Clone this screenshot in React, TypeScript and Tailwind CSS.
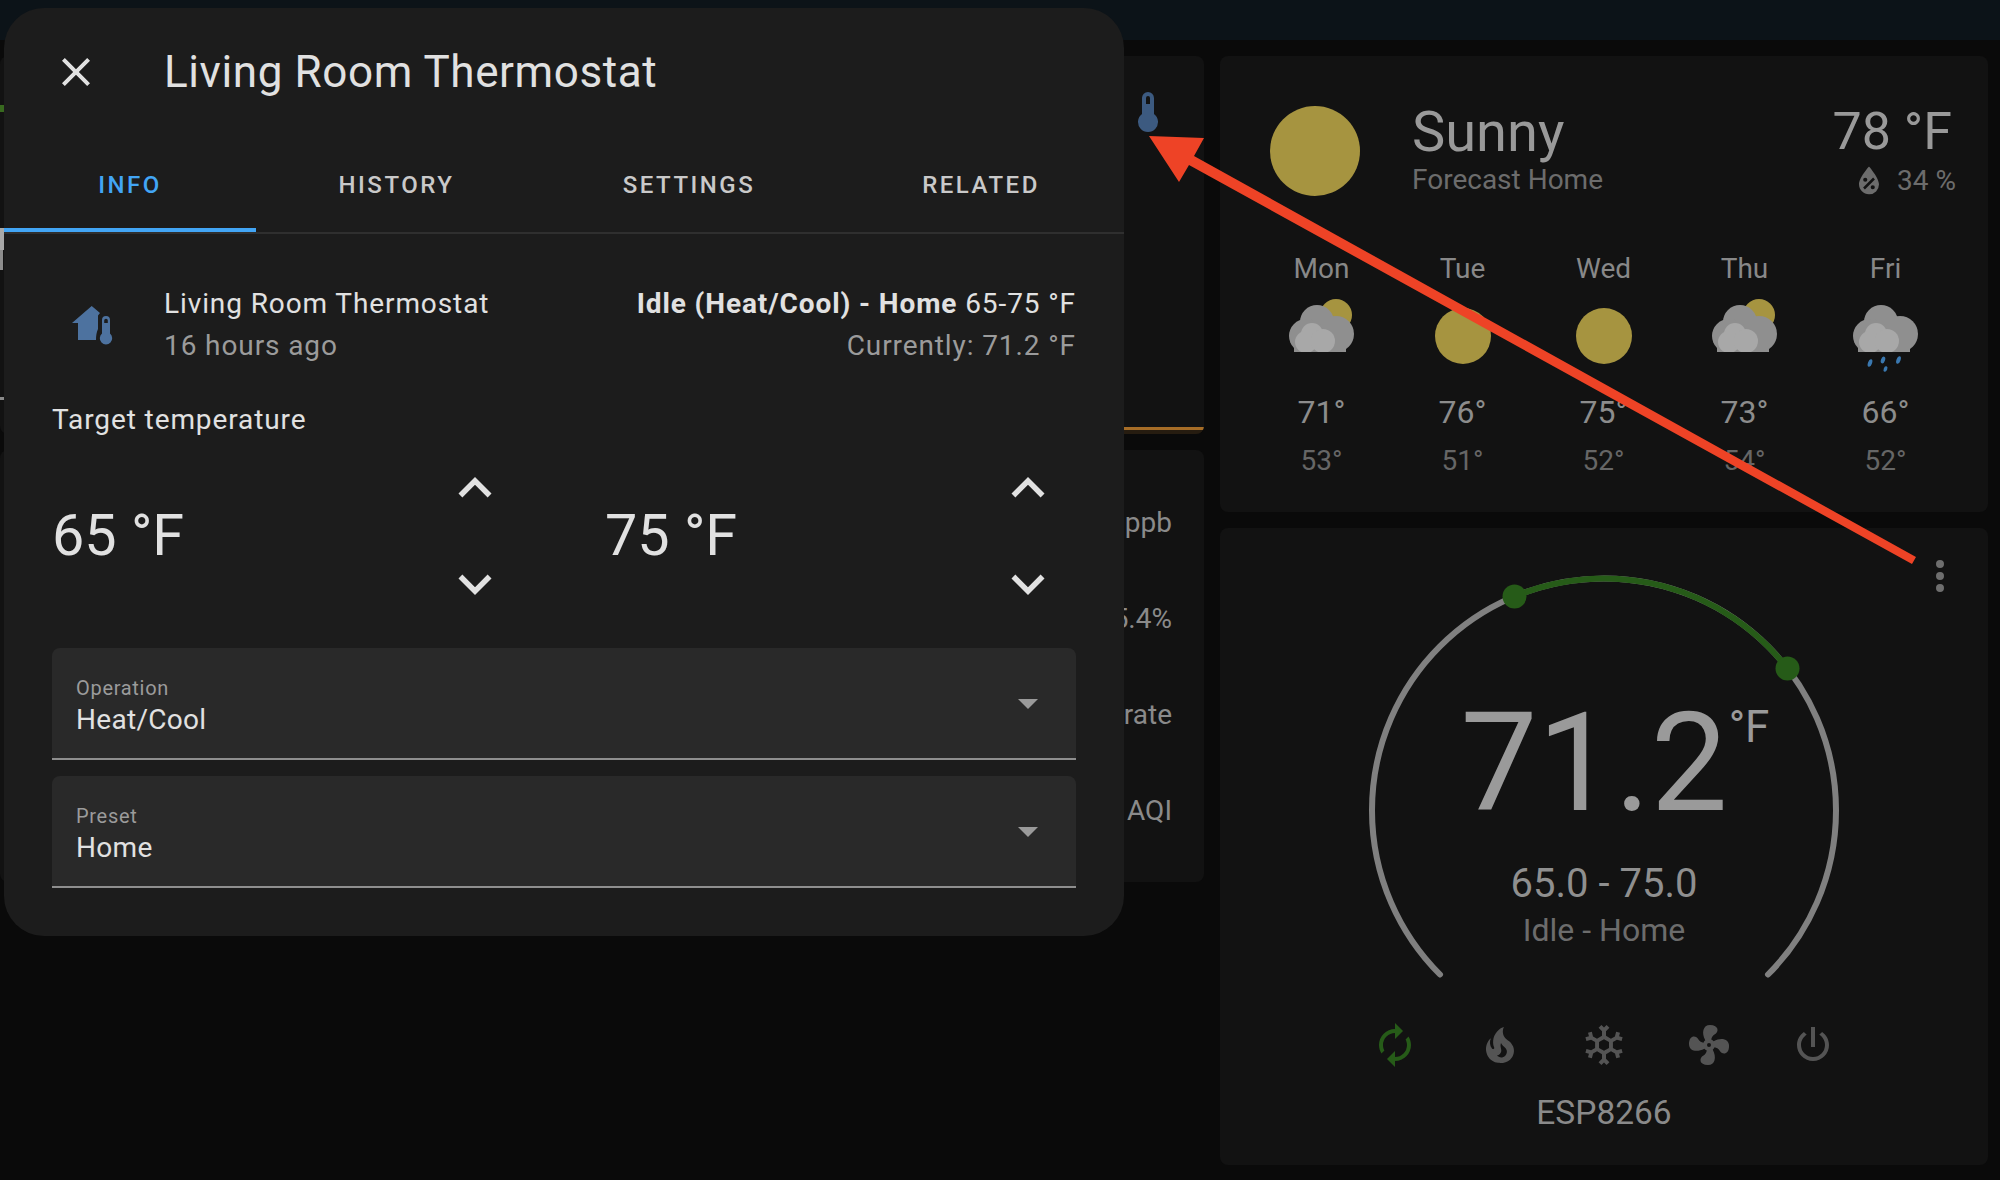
const font = { fontFamily: "Roboto, sans-serif" };

const ICONS = {
  close: "M19,6.41L17.59,5L12,10.59L6.41,5L5,6.41L10.59,12L5,17.59L6.41,19L12,13.41L17.59,19L19,17.59L13.41,12L19,6.41Z",
  up: "M7.41,15.41L12,10.83L16.59,15.41L18,14L12,8L6,14L7.41,15.41Z",
  down: "M7.41,8.58L12,13.17L16.59,8.58L18,10L12,16L6,10L7.41,8.58Z",
  menuDown: "M7,10L12,15L17,10H7Z",
  thermometer: "M15 13V5A3 3 0 0 0 9 5V13A5 5 0 1 0 15 13M12 4A1 1 0 0 1 13 5V8H11V5A1 1 0 0 1 12 4Z",
  waterPercent: "M12,3.25C12,3.25 6,10 6,14C6,17.32 8.69,20 12,20A6,6 0 0,0 18,14C18,10 12,3.25 12,3.25M14.47,9.97L15.53,11.03L9.53,17.03L8.47,15.97M9.75,10A1.25,1.25 0 0,1 11,11.25A1.25,1.25 0 0,1 9.75,12.5A1.25,1.25 0 0,1 8.5,11.25A1.25,1.25 0 0,1 9.75,10M14.25,14.5A1.25,1.25 0 0,1 15.5,15.75A1.25,1.25 0 0,1 14.25,17A1.25,1.25 0 0,1 13,15.75A1.25,1.25 0 0,1 14.25,14.5Z",
  autorenew: "M12,6V9L16,5L12,1V4A8,8 0 0,0 4,12C4,13.57 4.46,15.03 5.24,16.26L6.7,14.8C6.25,13.97 6,13 6,12A6,6 0 0,1 12,6M18.76,7.74L17.3,9.2C17.74,10.04 18,11 18,12A6,6 0 0,1 12,18V15L8,19L12,23V20A8,8 0 0,0 20,12C20,10.43 19.54,8.97 18.76,7.74Z",
  fire: "M17.66 11.2C17.43 10.9 17.15 10.64 16.89 10.38C16.22 9.78 15.46 9.35 14.82 8.72C13.33 7.26 13 4.85 13.95 3C13 3.23 12.17 3.75 11.46 4.32C8.87 6.4 7.85 10.07 9.07 13.22C9.11 13.32 9.15 13.42 9.15 13.55C9.15 13.77 9 13.97 8.8 14.05C8.57 14.15 8.33 14.09 8.14 13.93C8.08 13.88 8.04 13.83 8 13.76C6.87 12.33 6.69 10.28 7.45 8.64C5.78 10 4.87 12.3 5 14.47C5.06 14.97 5.12 15.47 5.29 15.97C5.43 16.57 5.7 17.17 6 17.7C7.08 19.43 8.95 20.67 10.96 20.92C13.1 21.19 15.39 20.8 17.03 19.32C18.86 17.66 19.5 15 18.56 12.72L18.43 12.46C18.22 12 17.66 11.2 17.66 11.2M14.5 17.5C14.22 17.74 13.76 18 13.4 18.1C12.28 18.5 11.16 17.94 10.5 17.28C11.69 17 12.4 16.12 12.61 15.23C12.78 14.43 12.46 13.77 12.33 13C12.21 12.26 12.23 11.63 12.5 10.94C12.69 11.32 12.89 11.7 13.13 12C13.9 13 15.11 13.44 15.37 14.8C15.41 14.94 15.43 15.08 15.43 15.23C15.46 16.05 15.1 16.95 14.5 17.5H14.5Z",
  snowflake: "M20.79,13.95L18.46,14.57L16.46,13.44V10.56L18.46,9.43L20.79,10.05L21.31,8.12L19.54,7.65L20,5.88L18.07,5.36L17.45,7.69L15.45,8.82L13,7.38V5.12L14.71,3.41L13.29,2L12,3.29L10.71,2L9.29,3.41L11,5.12V7.38L8.5,8.82L6.5,7.69L5.92,5.36L4,5.88L4.47,7.65L2.7,8.12L3.22,10.05L5.55,9.43L7.55,10.56V13.45L5.55,14.58L3.22,13.96L2.7,15.89L4.47,16.36L4,18.12L5.93,18.64L6.55,16.31L8.55,15.18L11,16.62V18.88L9.29,20.59L10.71,22L12,20.71L13.29,22L14.7,20.59L13,18.88V16.62L15.5,15.17L17.5,16.3L18.12,18.63L20,18.12L19.53,16.35L21.3,15.88L20.79,13.95M9.5,10.56L12,9.11L14.5,10.56V13.44L12,14.89L9.5,13.44V10.56Z",
  fan: "M12,11A1,1 0 0,0 11,12A1,1 0 0,0 12,13A1,1 0 0,0 13,12A1,1 0 0,0 12,11M12.5,2C17,2 17.11,5.57 14.75,6.75C13.76,7.24 13.32,8.29 13.13,9.22C13.61,9.42 14.03,9.73 14.35,10.13C18.05,8.13 22.03,8.92 22.03,12.5C22.03,17 18.46,17.1 17.28,14.73C16.78,13.74 15.72,13.3 14.79,13.11C14.59,13.59 14.28,14 13.88,14.34C15.87,18.03 15.08,22 11.5,22C7,22 6.91,18.42 9.27,17.24C10.25,16.75 10.69,15.71 10.89,14.79C10.4,14.59 9.97,14.27 9.65,13.87C5.96,15.85 2,15.07 2,11.5C2,7 5.56,6.89 6.74,9.26C7.24,10.25 8.29,10.68 9.22,10.87C9.41,10.39 9.73,9.97 10.14,9.65C8.15,5.96 8.94,2 12.5,2Z",
  power: "M16.56,5.44L15.11,6.89C16.84,7.94 18,9.83 18,12A6,6 0 0,1 12,18A6,6 0 0,1 6,12C6,9.83 7.16,7.94 8.88,6.88L7.44,5.44C5.36,6.88 4,9.28 4,12A8,8 0 0,0 12,20A8,8 0 0,0 20,12C20,9.28 18.64,6.88 16.56,5.44M13,3H11V13H13",
  dots: "M12,16A2,2 0 0,1 14,18A2,2 0 0,1 12,20A2,2 0 0,1 10,18A2,2 0 0,1 12,16M12,10A2,2 0 0,1 14,12A2,2 0 0,1 12,14A2,2 0 0,1 10,12A2,2 0 0,1 12,10M12,4A2,2 0 0,1 14,6A2,2 0 0,1 12,8A2,2 0 0,1 10,6A2,2 0 0,1 12,4Z",
};

function Icon({ d, className }: { d: string; className: string }) {
  return (
    <svg viewBox="0 0 24 24" className={className} fill="currentColor">
      <path d={d} />
    </svg>
  );
}

function HomeThermometer() {
  return (
    <svg viewBox="0 0 48 48" className="w-12 h-12 shrink-0" fill="#4d729f">
      <path d="M3 22 L22.7 5 L31 12 L29 14.5 V28 C27.5 31 27 35 27 39 H9 V22 Z" />
      <path
        fillRule="evenodd"
        d="M41 32.5 V19 A4 4 0 0 0 33 19 V32.5 A6.2 6.2 0 1 0 41 32.5 Z M37 17.8 A1.8 1.8 0 0 1 38.8 19.6 V22 H35.2 V19.6 A1.8 1.8 0 0 1 37 17.8 Z"
      />
    </svg>
  );
}

function Cloud({ id }: { id: string }) {
  return (
    <>
      <clipPath id={id}>
        <rect x="0" y="0" width="72" height="56" />
      </clipPath>
      <g clipPath={`url(#${id})`}>
        <g fill="#8f8f8f">
          <circle cx="31" cy="26" r="17" />
          <circle cx="20" cy="40" r="17" />
          <circle cx="50" cy="38" r="18" />
          <rect x="8" y="38" width="52" height="18" />
        </g>
        <g fill="#a8a8a8">
          <circle cx="26" cy="38" r="11" />
          <circle cx="20" cy="46" r="11" />
          <circle cx="37" cy="45" r="12" />
        </g>
      </g>
    </>
  );
}

function WeatherIcon({ kind, id }: { kind: string; id: string }) {
  return (
    <svg viewBox="0 0 72 80" className="w-[72px] h-20 overflow-visible">
      {kind === "sun" && <circle cx="36" cy="40" r="28" fill="#a69440" />}
      {kind === "partly" && <circle cx="50" cy="19" r="16" fill="#a69440" />}
      {kind !== "sun" && <Cloud id={id} />}
      {kind === "rain" && (
        <g fill="#3a78b0">
          <ellipse cx="20" cy="67" rx="2" ry="4" transform="rotate(20 20 67)" />
          <ellipse cx="33" cy="64" rx="2" ry="3.5" transform="rotate(20 33 64)" />
          <ellipse cx="48.5" cy="64" rx="2" ry="4" transform="rotate(20 48.5 64)" />
          <ellipse cx="35.5" cy="73" rx="1.8" ry="2.8" transform="rotate(20 35.5 73)" />
        </g>
      )}
    </svg>
  );
}

const forecast = [
  { day: "Mon", kind: "partly", hi: "71°", lo: "53°" },
  { day: "Tue", kind: "sun", hi: "76°", lo: "51°" },
  { day: "Wed", kind: "sun", hi: "75°", lo: "52°" },
  { day: "Thu", kind: "partly", hi: "73°", lo: "54°" },
  { day: "Fri", kind: "rain", hi: "66°", lo: "52°" },
];

function WeatherCard() {
  return (
    <div className="h-[456px] rounded-lg bg-[#121212] flex flex-col">
      <div className="flex pl-[50px] pr-[32px] pt-[50px] h-[192px]">
        <div className="w-[90px] h-[90px] rounded-full bg-[#a69440] shrink-0" />
        <div className="ml-[52px] flex-1 -mt-[4px]">
          <div className="text-[56px] leading-[60px] text-[#999999]">Sunny</div>
          <div className="text-[28px] leading-[34px] text-[#6c6c6c] mt-[1px]">Forecast Home</div>
        </div>
        <div className="flex flex-col items-end -mt-[4px]">
          <div className="text-[52px] leading-[60px] text-[#999999] mr-[4px]">78 °F</div>
          <div className="flex items-center gap-2 text-[#6c6c6c] text-[28px] leading-[34px] -mt-[1px]">
            <Icon d={ICONS.waterPercent} className="w-10 h-10" />
            <span>34 %</span>
          </div>
        </div>
      </div>
      <div className="flex justify-between pl-[31px] pr-[32px]">
        {forecast.map((f) => (
          <div key={f.day} className="w-[141px] flex flex-col items-center">
            <div className="text-[28px] leading-8 text-[#888888] mt-[5px]">{f.day}</div>
            <div className="mt-[11px] h-[80px]">
              <WeatherIcon kind={f.kind} id={`cloud-${f.day}`} />
            </div>
            <div className="text-[32px] leading-9 text-[#8c8c8c] mt-[18px]">{f.hi}</div>
            <div className="text-[28px] leading-8 text-[#666666] mt-[15px]">{f.lo}</div>
          </div>
        ))}
      </div>
    </div>
  );
}

function Dial() {
  return (
    <div className="relative w-[480px] h-[480px] flex flex-col items-center pt-[125px]">
      <svg viewBox="0 0 480 480" className="absolute inset-0 w-[480px] h-[480px]" fill="none">
        <path d="M76 404.5 A232 232 0 1 1 404 404.5" stroke="#808080" strokeWidth="6" strokeLinecap="round" />
        <path d="M150.5 26.5 A232 232 0 0 1 423.5 98.5" stroke="#265b18" strokeWidth="6" />
        <circle cx="150.5" cy="26.5" r="12" fill="#265b18" />
        <circle cx="423.5" cy="98.5" r="12" fill="#265b18" />
      </svg>
      <div className="flex items-start pl-[22px]">
        <span className="text-[137px] leading-[136px] text-[#9a9a9a]">71.2</span>
        <span className="text-[44px] leading-[40px] text-[#9a9a9a] mt-[12px] ml-[1px]">°F</span>
      </div>
      <div className="text-[40px] leading-[44px] text-[#8f8f8f] mt-[31px]">65.0 - 75.0</div>
      <div className="text-[32px] leading-[40px] text-[#6c6c6c] mt-[4px]">Idle - Home</div>
    </div>
  );
}

function ThermostatCard() {
  return (
    <div className="relative h-[637px] rounded-lg bg-[#121212] flex flex-col items-center pt-[42px]">
      <div className="absolute right-[24px] top-[24px] text-[#6e6e6e]">
        <Icon d={ICONS.dots} className="w-12 h-12" />
      </div>
      <Dial />
      <div className="flex gap-[56.5px] mt-[-29px] text-[#545454]">
        <Icon d={ICONS.autorenew} className="w-12 h-12 text-[#265b18]" />
        <Icon d={ICONS.fire} className="w-12 h-12" />
        <Icon d={ICONS.snowflake} className="w-12 h-12" />
        <Icon d={ICONS.fan} className="w-12 h-12" />
        <Icon d={ICONS.power} className="w-12 h-12" />
      </div>
      <div className="text-[33.5px] leading-[40px] text-[#8a8a8a] mt-[24px]">ESP8266</div>
    </div>
  );
}

function SideCards() {
  return (
    <div className="flex-1 flex flex-col gap-4 text-[#8a8a8a] text-[28px]">
      <div className="h-[378px] rounded-lg bg-[#121212] relative overflow-hidden pl-[1124px] pt-[32px]">
        <Icon d={ICONS.thermometer} className="w-12 h-12 text-[#3c5a80]" />
        {/* bits of the card behind the dialog, only a few px show at the left edge */}
        <div className="absolute left-0 top-[49px] w-[4px] h-[7px] bg-[#38691f]" />
        <div className="absolute left-0 top-[172px] w-[4px] h-[22px] bg-[#a8a8a8]" />
        <div className="absolute left-0 top-[194px] w-[3px] h-[20px] bg-[#8c8c8c]" />
        <div className="absolute left-0 top-[341px] w-[4px] h-[3px] bg-[#8a8a8a]" />
        <div className="absolute left-[100px] right-0 bottom-[4px] h-[3px] bg-[#a66d27]" />
        <div className="absolute left-[100px] right-0 bottom-0 h-[4px] bg-[#261c10]" />
      </div>
      <div className="h-[432px] rounded-lg bg-[#121212] flex flex-col items-end pr-[32px] pt-[55px] gap-[60px] leading-[36px]">
        <div>ppb</div>
        <div>5.4%</div>
        <div>rate</div>
        <div>AQI</div>
      </div>
    </div>
  );
}

function Select({ label, value }: { label: string; value: string }) {
  return (
    <div className="h-[112px] bg-[#292929] rounded-t-lg border-b-2 border-[#8e8e8e] flex items-center pl-6 pr-6">
      <div className="flex-1 pt-[7px]">
        <div className="text-[20px] leading-6 text-[#9b9b9b] tracking-[0.7px]">{label}</div>
        <div className="text-[28px] leading-9 text-[#e1e1e1] mt-[2px] tracking-[0.3px]">{value}</div>
      </div>
      <Icon d={ICONS.menuDown} className="w-12 h-12 text-[#9a9a9a]" />
    </div>
  );
}

function Stepper({ value }: { value: string }) {
  return (
    <div className="w-[456px] flex items-center">
      <div className="w-[390px] text-[57.5px] leading-[64px] text-[#e1e1e1]">{value}</div>
      <div className="flex flex-col items-center gap-[30px] w-[66px] text-[#e1e1e1]">
        <Icon d={ICONS.up} className="w-[66px] h-[66px]" />
        <Icon d={ICONS.down} className="w-[66px] h-[66px]" />
      </div>
    </div>
  );
}

const tabs = [
  { name: "INFO", w: "w-[252px]", active: true },
  { name: "HISTORY", w: "w-[281px]", active: false },
  { name: "SETTINGS", w: "w-[304px]", active: false },
  { name: "RELATED", w: "w-[280px]", active: false },
];

function Dialog() {
  return (
    <div className="absolute left-[4px] top-[8px] w-[1120px] h-[928px] rounded-[40px] bg-[#1c1c1c] overflow-hidden">
      <div className="flex items-center h-[128px] pl-[48px]">
        <Icon d={ICONS.close} className="w-12 h-12 text-[#e1e1e1]" />
        <div className="ml-[64px] text-[44px] leading-[50px] text-[#e1e1e1] tracking-[0.6px]">Living Room Thermostat</div>
      </div>
      <div className="flex h-[98px] border-b-2 border-[#2f2f2f]">
        {tabs.map((t) => (
          <div
            key={t.name}
            className={
              t.active
                ? "w-[252px] h-[96px] pt-[5px] flex items-center justify-center border-b-4 border-[#42a5f5] text-[#42a5f5] text-[24px] font-medium tracking-[2.5px]"
                : `${t.w} h-[96px] pt-[2px] flex items-center justify-center text-[#c9c9c9] text-[24px] font-medium tracking-[2.5px]`
            }
          >
            {t.name}
          </div>
        ))}
      </div>
      <div className="flex items-center pl-[65px] pr-[48px] pt-[58px] h-[124px]">
        <HomeThermometer />
        <div className="ml-[47px] flex-1">
          <div className="text-[28px] leading-[42px] text-[#e1e1e1] tracking-[0.9px]">Living Room Thermostat</div>
          <div className="text-[28px] leading-[42px] text-[#9b9b9b] tracking-[0.9px]">16 hours ago</div>
        </div>
        <div className="text-right">
          <div className="text-[28px] leading-[42px] text-[#e1e1e1] tracking-[0.9px]">
            <span className="font-bold">Idle (Heat/Cool) - Home</span> 65-75 °F
          </div>
          <div className="text-[28px] leading-[42px] text-[#9b9b9b] tracking-[0.9px]">Currently: 71.2 °F</div>
        </div>
      </div>
      <div className="pl-[48px] pr-[48px]">
        <div className="text-[28px] leading-[40px] text-[#e1e1e1] tracking-[0.9px] mt-[42px]">Target temperature</div>
        <div className="flex gap-[97px] mt-[6px] h-[180px]">
          <Stepper value="65 °F" />
          <Stepper value="75 °F" />
        </div>
        <div className="flex flex-col gap-4 mt-[22px]">
          <Select label="Operation" value="Heat/Cool" />
          <Select label="Preset" value="Home" />
        </div>
      </div>
    </div>
  );
}

function Arrow() {
  return (
    <svg viewBox="0 0 2000 1180" className="absolute inset-0 w-[2000px] h-[1180px] pointer-events-none">
      <polygon points="1149,136 1204,138 1194,156 1916,557 1912,564 1189,165 1179,182" fill="#ee4326" />
    </svg>
  );
}

export default function App() {
  return (
    <div className="relative w-[2000px] h-[1180px] bg-[#0a0a0a] overflow-hidden" style={font}>
      <div className="h-10 bg-[#0c1318]" />
      <div className="flex gap-4 pt-4 pr-3">
        <SideCards />
        <div className="w-[768px] flex flex-col gap-4">
          <WeatherCard />
          <ThermostatCard />
        </div>
      </div>
      <Dialog />
      <Arrow />
    </div>
  );
}
